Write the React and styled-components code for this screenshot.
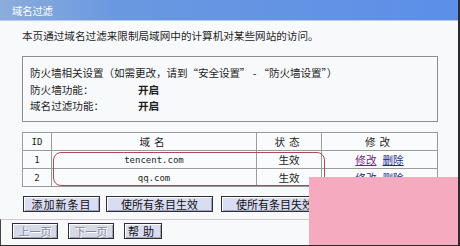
import styled, { createGlobalStyle } from "styled-components";

const Global = createGlobalStyle`
  html, body { margin: 0; padding: 0; background: #f7f8fa; }
  #root { width: 460px; height: 246px; overflow: hidden; }
`;

const Window = styled.div`
  position: relative;
  width: 460px;
  height: 246px;
  box-sizing: border-box;
  background: #f8f9fb;
  border-right: 2px solid #2b2b2b;
  border-bottom: 1px solid #2b2b2b;
  font-family: "Noto Sans CJK SC", "Noto Sans", sans-serif;
  font-size: 10.6px;
  color: #1e1e1e;
  display: flex;
  flex-direction: column;
  overflow: hidden;
`;

const TitleBar = styled.div`
  height: 20px;
  flex: none;
  display: flex;
  align-items: center;
  padding-left: 12px;
  background: linear-gradient(to right, #8cadda, #6a98e0 25%, #5b8fe8);
  border-bottom: 1px solid #b9cdee;
  color: #fff;
  font-size: 10.4px;
  letter-spacing: -0.2px;
`;

const Body = styled.div`
  padding: 6px 20px 0 22px;
  display: flex;
  flex-direction: column;
`;

const Desc = styled.div`
  height: 18px;
  line-height: 18px;
  margin-bottom: 11px;
`;

const Fieldset = styled.div`
  border: 1px solid #8d8d8d;
  box-shadow: inset 1px 1px 0 #fff;
  padding: 8px 7px 8px 7px;
  height: 66px;
  box-sizing: border-box;
  display: flex;
  flex-direction: column;
`;

const Line = styled.div`
  height: 16.5px;
  line-height: 16.5px;
  display: flex;
  white-space: pre;
  letter-spacing: ${(p) => p.$ls || 0}px;
`;

const Label = styled.span`
  width: 108px;
`;

const Value = styled.span`
  font-weight: bold;
`;

const Table = styled.table`
  margin-top: 10px;
  width: 416px;
  border-collapse: collapse;
  border: 1px solid #8a8a8a;
  background: #fafbfc;
`;

const Cell = styled.td`
  height: 17px;
  padding: 0;
  border: 1px solid #9a9a9a;
  box-shadow: inset 1px 1px 0 #fff;
  text-align: center;
  width: ${(p) => p.$w || "auto"};
  font-family: ${(p) =>
    p.$mono ? '"DejaVu Sans Mono", monospace' : 'inherit'};
  font-size: ${(p) => (p.$mono ? "9px" : "inherit")};
  letter-spacing: ${(p) => (p.$spaced ? "4px" : "0")};
`;

const Link = styled.a`
  color: ${(p) => (p.$visited ? "#6a2a7a" : "#1f2a8a")};
  text-decoration: underline;
  margin: 0 3px;
`;

const Buttons = styled.div`
  display: flex;
  gap: 6px;
  margin-top: 9px;
  margin-left: 1px;
`;

const Button = styled.button`
  height: 16px;
  width: ${(p) => p.$w}px;
  padding: 0;
  margin-right: ${(p) => p.$mr || 0}px;
  font-family: "Noto Sans CJK SC", sans-serif;
  font-size: 11px;
  line-height: 14px;
  color: ${(p) => (p.disabled ? "#8a8a9a" : "#111")};
  text-shadow: ${(p) => (p.disabled ? "1px 1px 0 #fff" : "none")};
  background: ${(p) => (p.disabled ? "#d6dae8" : "#d9ddf3")};
  border: 1px solid #2e2e2e;
  box-shadow: inset 1px 1px 0 #fff, inset -1px -1px 0 #9ea4b8;
  letter-spacing: ${(p) => p.$ls || 0}px;
`;

const Footer = styled.div`
  margin-top: auto;
  border-top: 1px solid #d9c9a8;
  border-left: 1px solid #444;
  padding: 3px 0 6px 11px;
  display: flex;
  gap: 10px;
`;

const Annotation = styled.div`
  position: absolute;
  left: 53px;
  top: 152px;
  width: 270px;
  height: 32px;
  border: 1.5px solid #b2475a;
  border-radius: 8px;
  pointer-events: none;
`;

const PinkPatch = styled.div`
  position: absolute;
  left: 309px;
  top: 177px;
  right: 0;
  bottom: 0;
  background: #f5aac0;
`;

export default function App() {
  return (
    <>
      <Global />
      <Window>
        <TitleBar>域名过滤</TitleBar>
        <Body>
          <Desc>本页通过域名过滤来限制局域网中的计算机对某些网站的访问。</Desc>
          <Fieldset>
            <Line $ls={-0.1}>防火墙相关设置（如需更改，请到“安全设置” - “防火墙设置”）</Line>
            <Line>
              <Label>防火墙功能：</Label>
              <Value>开启</Value>
            </Line>
            <Line>
              <Label>域名过滤功能：</Label>
              <Value>开启</Value>
            </Line>
          </Fieldset>
          <Table>
            <tbody>
              <tr>
                <Cell $w="28px" $mono>ID</Cell>
                <Cell $spaced>域名</Cell>
                <Cell $w="64px" $spaced>状态</Cell>
                <Cell $w="115px" $spaced>修改</Cell>
              </tr>
              <tr>
                <Cell $mono>1</Cell>
                <Cell $mono>tencent.com</Cell>
                <Cell>生效</Cell>
                <Cell>
                  <Link $visited>修改</Link>
                  <Link>删除</Link>
                </Cell>
              </tr>
              <tr>
                <Cell $mono>2</Cell>
                <Cell $mono>qq.com</Cell>
                <Cell>生效</Cell>
                <Cell>
                  <Link>修改</Link>
                  <Link>删除</Link>
                </Cell>
              </tr>
            </tbody>
          </Table>
          <Buttons>
            <Button $w={77} $ls={1}>添加新条目</Button>
            <Button $w={107} $mr={2}>使所有条目生效</Button>
            <Button $w={107}>使所有条目失效</Button>
          </Buttons>
        </Body>
        <Footer>
          <Button $w={46} disabled>上一页</Button>
          <Button $w={46} disabled>下一页</Button>
          <Button $w={38} $ls={4}>帮助</Button>
        </Footer>
        <Annotation />
        <PinkPatch />
      </Window>
    </>
  );
}
